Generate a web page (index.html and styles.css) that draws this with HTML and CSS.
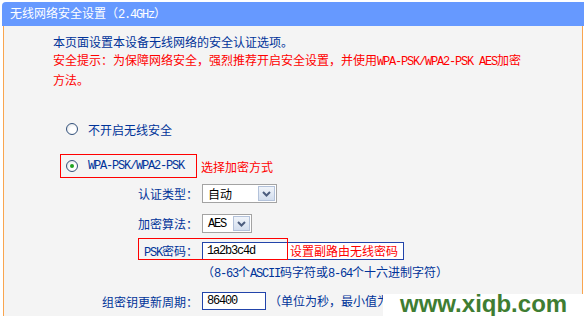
FILE: index.html
```html
<!DOCTYPE html>
<html lang="zh-CN">

<head>
    <meta charset="UTF-8">
    <meta name="viewport" content="width=device-width, initial-scale=1.0">
    <title>无线网络安全设置</title>
    <link rel="stylesheet" href="styles.css">
</head>

<body>
    <div class="page">
        <div class="title">无线网络安全设置（<span class="en">2.4GHz</span>）</div>
        <div class="panel">
            <p class="intro">本页面设置本设备无线网络的安全认证选项。</p>
            <p class="intro warn">安全提示：为保障网络安全，强烈推荐开启安全设置，并使用<span class="en">WPA-PSK/WPA2-PSK AES</span>加密<br>方法。</p>

            <div class="option first">
                <span class="radio"></span>
                <span>不开启无线安全</span>
            </div>
            <div class="option-row">
                <div class="option marked">
                    <span class="radio checked"></span>
                    <span class="en">WPA-PSK/WPA2-PSK</span>
                </div>
                <span class="note">选择加密方式</span>
            </div>

            <div class="field auth">
                <span class="label">认证类型：</span>
                <div class="select w-auth">
                    <span class="select-value">自动</span>
                    <span class="select-btn">
                        <svg width="9" height="6" viewBox="0 0 9 6"><path d="M1 1l3.5 3.5L8 1" fill="none" stroke="#4c5d7e" stroke-width="2"/></svg>
                    </span>
                </div>
            </div>

            <div class="field cipher">
                <span class="label">加密算法：</span>
                <div class="select w-cipher">
                    <span class="select-value en">AES</span>
                    <span class="select-btn">
                        <svg width="9" height="6" viewBox="0 0 9 6"><path d="M1 1l3.5 3.5L8 1" fill="none" stroke="#4c5d7e" stroke-width="2"/></svg>
                    </span>
                </div>
            </div>

            <div class="field psk">
                <span class="label"><span class="en">PSK</span>密码：</span>
                <div class="input w-psk">
                    <span class="en">1a2b3c4d</span>
                    <span class="psk-note">设置副路由无线密码</span>
                </div>
                <div class="mark-box"></div>
            </div>

            <div class="hint">（<span class="en">8-63</span>个<span class="en">ASCII</span>码字符或<span class="en">8-64</span>个十六进制字符）</div>

            <div class="field rekey">
                <span class="label">组密钥更新周期：</span>
                <div class="input w-rekey">
                    <span class="en">86400</span>
                </div>
                <span class="unit">（单位为秒，最小值为<span class="en">30</span>，不更新则为<span class="en">0</span>）</span>
            </div>
        </div>
        <div class="watermark">www.xiqb.com</div>
    </div>
</body>

</html>
```

FILE: styles.css
```css
body {
    margin: 0;
    background: #fff;
    font-family: "Noto Sans CJK SC", sans-serif;
    font-size: 12px;
    color: #003399;
}

.page {
    position: relative;
    width: 584px;
    height: 316px;
    padding: 2px 0 0 2px;
    box-sizing: border-box;
    overflow: hidden;
}

.en {
    font-family: "Liberation Mono", monospace;
    font-size: 12px;
    letter-spacing: -1.2px;
}

.title {
    height: 24px;
    line-height: 22px;
    padding-left: 8px;
    background: #6699ff;
    color: #fff;
    border-radius: 4px 0 0 0;
}

.panel {
    margin-left: 1px;
    width: 580px;
    height: 290px;
    box-sizing: border-box;
    padding: 7px 0 0 49px;
    background: #f4f4f4;
    border-left: 1px solid #f9a54f;
    border-right: 1px solid #f9a54f;
}

.intro {
    margin: 0;
    line-height: 18px;
    white-space: nowrap;
}

.warn {
    color: #ff0000;
}

/* radio options */
.option {
    display: flex;
    align-items: center;
    gap: 10px;
    width: max-content;
    height: 24px;
    box-sizing: border-box;
    padding: 0 12px 0 5px;
    border: 1px solid transparent;
}

.option.first {
    margin: 28px 0 0 7px;
}

.option-row {
    display: flex;
    align-items: center;
    margin: 13px 0 0 7px;
}

.option.marked {
    border-color: #ff0000;
}

.note {
    margin-left: 4px;
    color: #ff0000;
}

.radio {
    position: relative;
    flex: none;
    width: 12px;
    height: 12px;
    box-sizing: border-box;
    border: 1px solid #34527c;
    border-radius: 50%;
    background: radial-gradient(circle at 60% 60%, #fff 0, #fff 35%, #d6d9de 100%);
}

.radio.checked::after {
    content: "";
    position: absolute;
    left: 3px;
    top: 3px;
    width: 4px;
    height: 4px;
    border-radius: 50%;
    background: #21a321;
}

/* form rows */
.field {
    display: flex;
    align-items: center;
    height: 19px;
}

.label {
    width: 145px;
    margin-right: 4px;
    text-align: right;
    white-space: nowrap;
}

.auth {
    margin-top: 6px;
}

.cipher {
    margin-top: 11px;
}

.psk {
    position: relative;
    margin-top: 9px;
    height: 18px;
}

.rekey {
    margin-top: 10px;
    height: 18px;
}

.select {
    display: flex;
    align-items: center;
    height: 19px;
    box-sizing: border-box;
    padding-right: 1px;
    border: 1px solid #a3a3a3;
    background: #fff;
}

.w-auth {
    width: 75px;
}

.w-cipher {
    width: 50px;
}

.select-value {
    flex: 1;
    padding-left: 5px;
    color: #000;
}

.select-btn {
    display: flex;
    align-items: center;
    justify-content: center;
    width: 17px;
    height: 15px;
    box-sizing: border-box;
    border: 1px solid #b3c2da;
    background: linear-gradient(#f0f4fa, #d3deee);
}

.input {
    position: relative;
    display: flex;
    align-items: center;
    height: 18px;
    box-sizing: border-box;
    padding-left: 4px;
    border: 1px solid #2244aa;
    background: #fff;
    color: #000;
}

.w-psk {
    width: 202px;
}

.w-rekey {
    width: 64px;
}

.psk-note {
    position: absolute;
    left: 87px;
    top: 0;
    line-height: 16px;
    color: #ff0000;
}

.mark-box {
    position: absolute;
    left: 85px;
    top: -4px;
    width: 150px;
    height: 22px;
    box-sizing: border-box;
    border: 1px solid #ff0000;
    pointer-events: none;
}

.hint {
    margin: 4px 0 0 149px;
    line-height: 16px;
    white-space: nowrap;
}

.unit {
    margin-left: 3px;
    white-space: nowrap;
}

.watermark {
    position: absolute;
    left: 383px;
    top: 294px;
    width: 201px;
    height: 22px;
    box-sizing: border-box;
    padding-left: 17px;
    background: #fff;
    font: bold 24px/20px "Liberation Sans", sans-serif;
    color: #3f7d32;
}
```
